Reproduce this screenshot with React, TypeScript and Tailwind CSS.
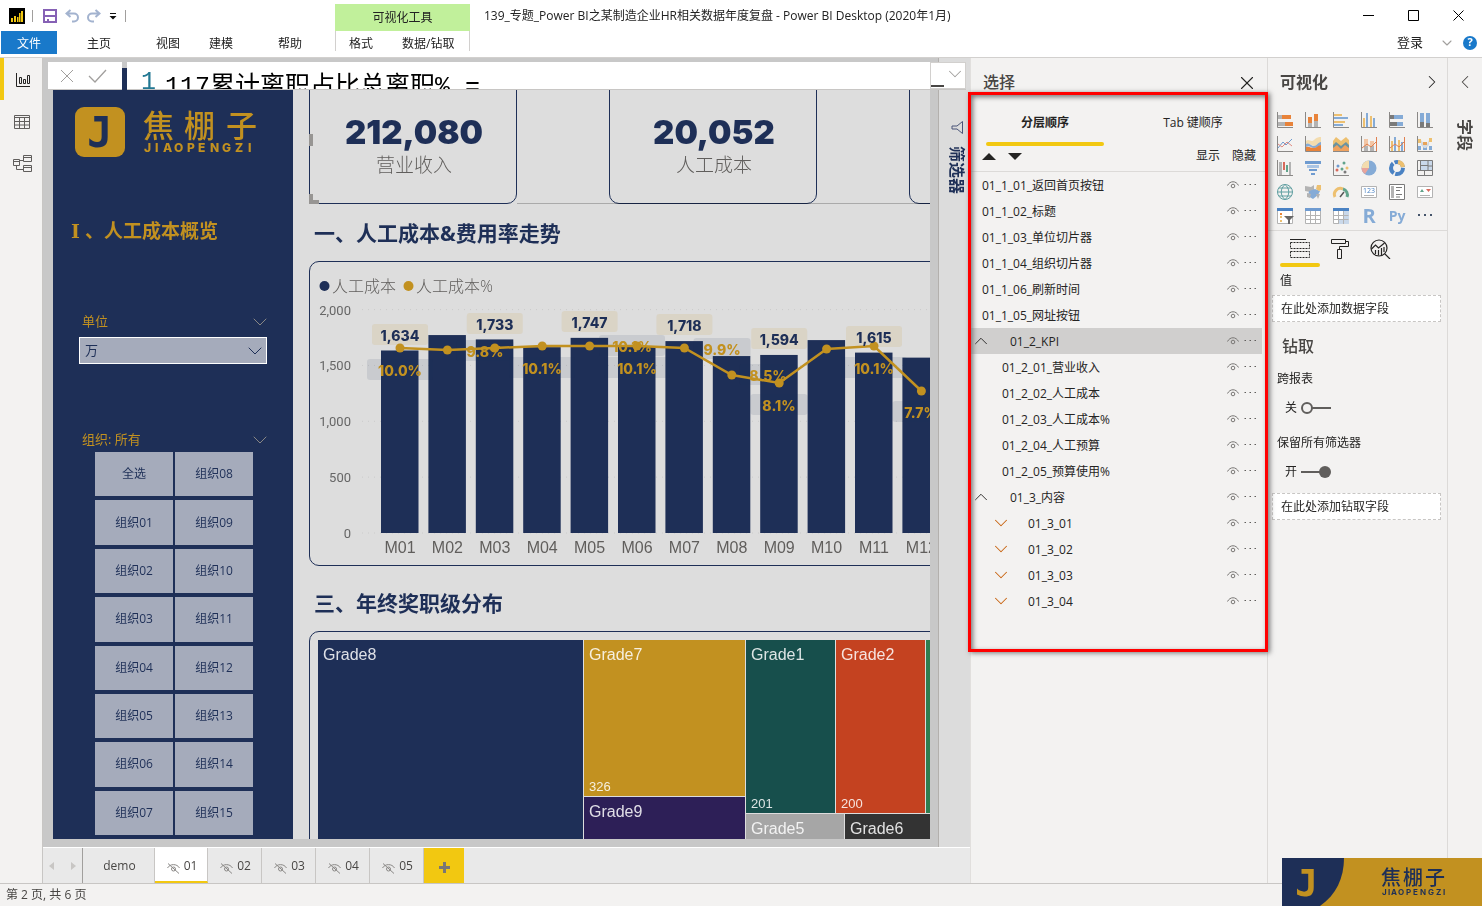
import type { ReactNode } from "react";
import { ChevronDown, ChevronLeft, ChevronRight, ChevronUp, X } from "lucide-react";

// ─── Data ────────────────────────────────────────────────────────────────────

const ORGS = [
  "全选", "组织08", "组织01", "组织09", "组织02", "组织10", "组织03", "组织11",
  "组织04", "组织12", "组织05", "组织13", "组织06", "组织14", "组织07", "组织15",
];

const MONTHS = [
  { name: "M01", cost: 1634, lineY: 86, label: "1,634", labelY: 62 },
  { name: "M02", cost: 1772, lineY: 88 },
  { name: "M03", cost: 1733, lineY: 86, label: "1,733", labelY: 51 },
  { name: "M04", cost: 1664, lineY: 84 },
  { name: "M05", cost: 1747, lineY: 84, label: "1,747", labelY: 49 },
  { name: "M06", cost: 1670, lineY: 84 },
  { name: "M07", cost: 1718, lineY: 86, label: "1,718", labelY: 52 },
  { name: "M08", cost: 1584, lineY: 113 },
  { name: "M09", cost: 1594, lineY: 121, label: "1,594", labelY: 66 },
  { name: "M10", cost: 1727, lineY: 87 },
  { name: "M11", cost: 1615, lineY: 84, label: "1,615", labelY: 64 },
  { name: "M12", cost: 1570, lineY: 129 },
];

const RATES = [
  { text: "10.0%", x: 90, y: 97, w: 66 },
  { text: "9.8%", x: 175, y: 78, w: 57 },
  { text: "10.1%", x: 232, y: 95, w: 66 },
  { text: "10.1%", x: 322, y: 73, w: 66 },
  { text: "10.1%", x: 327, y: 95, w: 66 },
  { text: "9.9%", x: 412, y: 76, w: 57 },
  { text: "8.5%", x: 458, y: 102, w: 57 },
  { text: "8.1%", x: 469, y: 132, w: 57 },
  { text: "10.1%", x: 564, y: 95, w: 66 },
  { text: "7.7%", x: 611, y: 139, w: 57 },
];

type Layer = { name: string; kind: "item" | "group" | "child" | "sub"; selected?: boolean };

const LAYERS: Layer[] = [
  { name: "01_1_01_返回首页按钮", kind: "item" },
  { name: "01_1_02_标题", kind: "item" },
  { name: "01_1_03_单位切片器", kind: "item" },
  { name: "01_1_04_组织切片器", kind: "item" },
  { name: "01_1_06_刷新时间", kind: "item" },
  { name: "01_1_05_网址按钮", kind: "item" },
  { name: "01_2_KPI", kind: "group", selected: true },
  { name: "01_2_01_营业收入", kind: "child" },
  { name: "01_2_02_人工成本", kind: "child" },
  { name: "01_2_03_人工成本%", kind: "child" },
  { name: "01_2_04_人工预算", kind: "child" },
  { name: "01_2_05_预算使用%", kind: "child" },
  { name: "01_3_内容", kind: "group" },
  { name: "01_3_01", kind: "sub" },
  { name: "01_3_02", kind: "sub" },
  { name: "01_3_03", kind: "sub" },
  { name: "01_3_04", kind: "sub" },
];

const layerIndent = {
  item: "pl-[11px]",
  group: "pl-[5px]",
  child: "pl-[31px]",
  sub: "pl-[25px]",
};

// ─── Header ──────────────────────────────────────────────────────────────────

function Header() {
  return (
    <header className="flex h-[58px] shrink-0 border-b border-[#d2d0ce] bg-white text-xs text-[#222]">
      <div className="flex w-[335px] shrink-0 flex-col">
        <div className="flex h-[31px] items-center pl-[9px]">
          <svg width="16" height="16" viewBox="0 0 16 16">
            <path d="M0 0h16v16H0z" fill="#000" />
            <path d="M2 10h2v4H2zM5 8h2v6H5zM8 9h1.500v5H8zM10 5h1.500v9H10zM12 3h2v11h-2z" fill="#f2c811" />
          </svg>
          <span className="ml-[7px] h-3 w-px bg-[#a19f9d]" />
          <button aria-label="保存" className="ml-2.5">
            <svg width="14" height="14" viewBox="0 0 14 14" fill="none" stroke="#8661b5" strokeWidth="2">
              <path d="M1 1h12v12H1zM1 7h12" />
              <path d="M3 13h8M5 10v4" />
            </svg>
          </button>
          <button aria-label="撤消" className="ml-2">
            <svg width="14" height="14" viewBox="0 0 14 14" fill="none" stroke="#a3b3cf" strokeWidth="2">
              <path d="M5.500 1L1.500 4.500 5.500 8M2 4.500h7a3.600 3.600 0 010 8H7" />
            </svg>
          </button>
          <button aria-label="恢复" className="ml-2">
            <svg width="14" height="14" viewBox="0 0 14 14" fill="none" stroke="#a3b3cf" strokeWidth="2">
              <path d="M8.500 1l4 3.500-4 3.500M12 4.500H5a3.600 3.600 0 000 8h2" />
            </svg>
          </button>
          <button aria-label="自定义快速访问工具栏" className="ml-2">
            <svg width="8" height="8" viewBox="0 0 8 8" fill="#111">
              <path d="M1 1h6v1H1zM.5 4h7L4 7.500z" />
            </svg>
          </button>
          <span className="ml-2 h-3 w-px bg-[#a19f9d]" />
        </div>
        <nav className="flex h-[23px] items-center pl-px">
          <button className="h-full w-14 bg-[#1979ca] pt-0.5 text-white">文件</button>
          <button className="ml-[30px] pt-0.5">主页</button>
          <button className="ml-[45px] pt-0.5">视图</button>
          <button className="ml-[29px] pt-0.5">建模</button>
          <button className="ml-[45px] pt-0.5">帮助</button>
        </nav>
      </div>
      <div className="mt-1 flex w-[135px] shrink-0 flex-col">
        <div className="flex h-[27px] items-center justify-center bg-[#c1f09b]">可视化工具</div>
        <div className="flex h-[20px] items-center border-x border-[#d2d0ce] pt-1.5">
          <button className="ml-[13px]">格式</button>
          <button className="ml-[29px]">数据/钻取</button>
        </div>
      </div>
      <div className="flex min-w-0 flex-1 flex-col">
        <div className="flex h-[31px] items-center justify-between pr-[18px] pl-3.5">
          <span className="truncate text-xs">
            139_专题_Power BI之某制造企业HR相关数据年度复盘 - Power BI Desktop (2020年1月)
          </span>
          <div className="flex shrink-0 items-center gap-[34px]">
            <button aria-label="最小化">
              <svg width="11" height="11" viewBox="0 0 11 11" stroke="#000"><path d="M0 5.500h11" /></svg>
            </button>
            <button aria-label="最大化">
              <svg width="11" height="11" viewBox="0 0 11 11" fill="none" stroke="#000"><path d="M.5.5h10v10H.5z" /></svg>
            </button>
            <button aria-label="关闭">
              <svg width="11" height="11" viewBox="0 0 11 11" stroke="#000"><path d="M.5.5l10 10M10.500.5l-10 10" /></svg>
            </button>
          </div>
        </div>
        <div className="flex h-[23px] items-center justify-end pr-[5px]">
          <button className="text-[13px]">登录</button>
          <button aria-label="折叠功能区" className="ml-4 text-[#a19f9d]"><ChevronDown size={16} strokeWidth={1.6} /></button>
          <button aria-label="帮助" className="ml-2 flex size-3.5 items-center justify-center rounded-full bg-[#1979ca] text-[11px] font-bold text-white">
            ?
          </button>
        </div>
      </div>
    </header>
  );
}

// ─── Left rail ───────────────────────────────────────────────────────────────

function ViewRail() {
  return (
    <nav className="flex w-[43px] shrink-0 flex-col border-r border-[#c8c6c4] bg-[#f3f2f1]">
      <button aria-label="报表" className="flex h-[42px] items-center justify-center border-l-4 border-[#f2c811] pt-0.5">
        <svg width="16" height="16" viewBox="0 0 16 16" fill="none" stroke="#252423">
          <path d="M1.500 1v13.500H15M4.500 5.500h2v6h-2zM8.500 7.500h2v4h-2zM12.500 3.500h2v8h-2z" />
        </svg>
      </button>
      <button aria-label="数据" className="flex h-[42px] items-center justify-center pt-0.5 pl-0.5">
        <svg width="16" height="16" viewBox="0 0 16 16" fill="none" stroke="#605e5c">
          <path d="M.5 1.500h15v13H.5zM.5 3.500h15M.5 7.500h15M.5 11h15M5.500 3.500v11M10.500 3.500v11" />
        </svg>
      </button>
      <button aria-label="模型" className="flex h-[42px] items-center justify-center pt-0.5 pl-1">
        <svg width="20" height="18" viewBox="0 0 20 18" fill="none" stroke="#605e5c">
          <path d="M.5 4.500h6v6h-6zM10.500.5h8v6h-8zM10.500 10.500h8v6h-8zM.5 6.500h6M10.500 2.500h8M10.500 12.500h8M6.500 5.500h4M3.500 10.500v4h7" />
        </svg>
      </button>
    </nav>
  );
}

// ─── Report page ─────────────────────────────────────────────────────────────

function BrandLogo() {
  return (
    <svg width="184" height="50" viewBox="0 0 184 50" className="font-['Inter','Noto_Sans_CJK_SC',sans-serif]">
      <rect width="50" height="50" rx="9" fill="#c29120" />
      <text x="12" y="40" fontSize="42" fontWeight="700" fill="#1e2f57" className="font-['DejaVu_Sans_Mono',monospace]">J</text>
      <g fill="#c29120">
        <text x="68 109 151" y="30" fontSize="31" fontWeight="500">焦棚子</text>
        <text x="69 80 88 99 112 123 135 147 160 173" y="45" fontSize="12" fontWeight="800">JIAOPENGZI</text>
      </g>
    </svg>
  );
}

function ReportSidebar() {
  return (
    <aside className="flex w-60 shrink-0 flex-col bg-[#1e2f57] pt-[39px] pb-1 text-[#c29120]">
      <div className="pl-[22px]">
        <BrandLogo />
      </div>
      <h1 className="mt-[60px] h-7 pl-[13px] text-[19px] leading-7 font-bold whitespace-nowrap">
        <span className="inline-block w-[19px] text-center font-['DejaVu_Serif',serif]">Ⅰ</span>、人工成本概览
      </h1>
      <div className="mt-[68px] flex h-[18px] items-center justify-between pr-[21px] pl-[29px] text-[13px]">
        <label htmlFor="unit">单位</label>
        <ChevronDown size={24} strokeWidth={1} className="text-[#8a8886]" />
      </div>
      <div className="mt-1.5 mr-[26px] ml-[26px] grid text-[#1e2f57]">
        <select id="unit" className="col-start-1 row-start-1 h-[27px] appearance-none border border-white bg-[#a5abbb] pl-[5px] text-[13px]">
          <option>万</option>
        </select>
        <ChevronDown size={24} strokeWidth={1} className="pointer-events-none col-start-1 row-start-1 self-center justify-self-end" />
      </div>
      <div className="mt-[67px] flex h-[18px] items-center justify-between pr-[21px] pl-[29px] text-[13px]">
        <span>组织: 所有</span>
        <ChevronDown size={24} strokeWidth={1} className="text-[#8a8886]" />
      </div>
      <div className="mx-[42px] mt-[3px] grid h-[383px] grid-cols-[78px_78px] grid-rows-8 gap-x-0.5 gap-y-1">
        {ORGS.map((org) => (
          <button key={org} className="bg-[#a5abbb] text-xs text-[#1e2f57]">
            {org}
          </button>
        ))}
      </div>
    </aside>
  );
}

function KpiCard({ value, label }: { value?: string; label?: string }) {
  return (
    <div className="h-[136px] w-[208px] shrink-0 rounded-[10px] border border-[#1e2f57] pt-[43px] pl-0.5 text-center">
      {value && (
        <div className="h-10 font-['Inter',sans-serif] text-[33px] leading-10 font-black text-[#1e2f57]">{value}</div>
      )}
      {label && <div className="mt-px text-[19px] leading-6 font-light text-[#605e5c]">{label}</div>}
    </div>
  );
}

const barX = (i: number) => 90 + i * 47.4;
const costY = (v: number) => 271 - v * 0.1117;

function CostChart() {
  return (
    <svg width="662" height="303" viewBox="0 0 662 303" className="block">
      <g fontSize="16" fill="#605e5c" fontWeight="300">
        <circle cx="14.500" cy="24" r="5" fill="#1e2f57" />
        <text x="22" y="30">人工成本</text>
        <circle cx="98.500" cy="24" r="5" fill="#c29120" />
        <text x="106" y="30">人工成本%</text>
      </g>
      {[2000, 1500, 1000, 500, 0].map((v) => (
        <g key={v}>
          <line x1="52" x2="662" y1={costY(v)} y2={costY(v)} stroke="#cbcbcb" strokeDasharray="1 5" />
          <text x="41" y={costY(v) + 5} textAnchor="end" fontSize="13" fill="#666" className="font-['Roboto',sans-serif]">
            {v.toLocaleString("en-US")}
          </text>
        </g>
      ))}
      {MONTHS.map((m, i) => (
        <g key={m.name}>
          <rect x={barX(i) - 19} y={costY(m.cost)} width="37.500" height={271 - costY(m.cost)} fill="#1e2f57" />
          <text x={barX(i)} y="291" textAnchor="middle" fontSize="16" fill="#605e5c" className="font-['Liberation_Sans',sans-serif]">
            {m.name}
          </text>
        </g>
      ))}
      {RATES.map((r, i) => (
        <rect key={i} x={r.x - r.w / 2} y={r.y} width={r.w} height="21" rx="3" fill="#1e2f57" fillOpacity="0.1" />
      ))}
      <polyline
        points={MONTHS.map((m, i) => `${barX(i)},${m.lineY}`).join(" ")}
        fill="none"
        stroke="#c29120"
        strokeWidth="2.500"
      />
      {MONTHS.map((m, i) => (
        <circle key={m.name} cx={barX(i)} cy={m.lineY} r="4.500" fill="#c29120" />
      ))}
      <g fontSize="14" fontWeight="800" textAnchor="middle" className="font-['Inter',sans-serif]">
        {RATES.map((r, i) => (
          <text key={i} x={r.x} y={r.y + 17} fill="#c29120">{r.text}</text>
        ))}
        {MONTHS.map((m, i) =>
          m.label ? (
            <g key={m.name}>
              <rect x={barX(i) - 28} y={m.labelY} width="56" height="21" rx="3" fill="#c29120" fillOpacity="0.12" />
              <text x={barX(i)} y={m.labelY + 17} fill="#1e2f57">{m.label}</text>
            </g>
          ) : null,
        )}
      </g>
    </svg>
  );
}

function Tile({ name, value, className }: { name: string; value?: string; className: string }) {
  return (
    <div className={`flex flex-col justify-between overflow-hidden px-[5px] pt-[5px] text-white/85 ${className}`}>
      <span className="text-base leading-5">{name}</span>
      {value && <span className="text-[13px] leading-[18px]">{value}</span>}
    </div>
  );
}

function GradeTreemap() {
  return (
    <div className="flex h-[220px] gap-px font-['Liberation_Sans',sans-serif]">
      <Tile name="Grade8" className="w-[265px] bg-[#1e2f57]" />
      <div className="flex w-[161px] flex-col gap-px">
        <Tile name="Grade7" value="326" className="h-[156px] bg-[#c29120]" />
        <Tile name="Grade9" className="flex-1 bg-[#2d1f57]" />
      </div>
      <div className="flex flex-1 flex-col gap-px">
        <div className="flex h-[173px] gap-px">
          <Tile name="Grade1" value="201" className="w-[89px] bg-[#174f4c]" />
          <Tile name="Grade2" value="200" className="w-[89px] bg-[#c44220]" />
          <Tile name="" className="flex-1 bg-[#2f7d4f]" />
        </div>
        <div className="flex flex-1 gap-px">
          <Tile name="Grade5" className="w-[98px] bg-[#a6a6a6]" />
          <Tile name="Grade6" className="flex-1 bg-[#333]" />
        </div>
      </div>
    </div>
  );
}

function ReportCanvas() {
  return (
    <div className="min-w-0 flex-1 bg-[#c8c8c8] pt-2.5 pr-2 pb-2 pl-2.5">
      <div className="flex h-[771px] overflow-hidden bg-[#ddd]">
        <ReportSidebar />
        <div className="w-[700px] shrink-0 pl-4 text-[#1e2f57]">
          <div className="relative flex h-[136px] gap-[92px] overflow-hidden">
            <KpiCard value="212,080" label="营业收入" />
            <KpiCard value="20,052" label="人工成本" />
            <KpiCard />
            {/* selection frame and handles */}
            <span className="absolute bottom-0 left-[208px] h-px w-full bg-[#c4c4c4] mix-blend-multiply" />
            <span className="absolute top-[66px] left-0 h-3 w-1 bg-[#979593]" />
            <span className="absolute bottom-0 left-0 size-2.5 border-b-4 border-l-4 border-[#979593]" />
          </div>
          <h2 className="h-[57px] pl-[5px] text-[21px] leading-[58px] font-bold">一、人工成本&amp;费用率走势</h2>
          <section className="h-[305px] overflow-hidden rounded-[10px] border border-[#1e2f57]">
            <CostChart />
          </section>
          <h2 className="h-[65px] pt-2 pl-[5px] text-[21px] leading-[58px] font-bold">三、年终奖职级分布</h2>
          <section className="rounded-[10px] border border-[#1e2f57] p-2">
            <GradeTreemap />
          </section>
        </div>
      </div>
    </div>
  );
}

function FormulaBar() {
  return (
    <div className="absolute top-1 right-1 left-[5px] flex h-7 gap-[5px]">
      <div className="flex w-[74px] shrink-0 items-center justify-center gap-3.5 border-b border-[#c8c6c4] bg-white pr-1 text-[#a19f9d]">
        <button aria-label="取消">
          <svg width="14" height="14" viewBox="0 0 14 14" fill="none" stroke="currentColor">
            <path d="M1 1l12 12M13 1L1 13" />
          </svg>
        </button>
        <button aria-label="提交">
          <svg width="19" height="14" viewBox="0 0 19 14" fill="none" stroke="currentColor" strokeWidth="1.300">
            <path d="M1 7l6 6L18 1" />
          </svg>
        </button>
      </div>
      <div className="flex min-w-0 flex-1 overflow-hidden border-b border-[#c8c6c4] bg-white">
        <div className="flex h-[42px] min-w-0 flex-1 items-center font-['Liberation_Mono','Noto_Sans_CJK_SC',monospace] text-[25px] text-black">
          <span className="w-[38px] shrink-0 pl-3.5 text-[#237893]">1</span>
          <input aria-label="公式" defaultValue="117累计离职占比总离职% =" className="h-10 min-w-0 flex-1 outline-none" />
        </div>
        <div className="flex w-9 shrink-0 items-start justify-between border border-[#d2d0ce]">
          <span className="mt-[22px] h-0.5 w-[13px] shrink-0 bg-[#484644]" />
          <button aria-label="展开" className="text-[#a19f9d]"><ChevronDown size={22} strokeWidth={1.1} /></button>
        </div>
      </div>
    </div>
  );
}

function FilterStrip() {
  return (
    <div className="flex w-8 shrink-0 flex-col items-center border-l border-[#b3b0ad] bg-[#dcdcdc] pt-[63px] pl-1">
      <button className="flex flex-col items-center gap-3 text-[#1e2f57]">
        <svg width="12" height="13" viewBox="0 0 12 13" fill="none" stroke="#4a5578">
          <path d="M11.500.5v12L6 8H1V5h5z" />
        </svg>
        <span className="text-base leading-4 font-bold [text-orientation:sideways] [writing-mode:vertical-rl]">筛选器</span>
      </button>
    </div>
  );
}

// ─── Page tabs ───────────────────────────────────────────────────────────────

function EyeOff() {
  return (
    <svg width="13" height="12" viewBox="0 0 13 12" fill="none" stroke="#8a8886" className="mt-1">
      <path d="M.5 6C3 1.500 10 1.500 12.500 6M1 1.500l11 10M6.500 5a2 2 0 100 4 2 2 0 000-4z" />
    </svg>
  );
}

function PageTabs() {
  return (
    <div className="flex h-9 shrink-0 border-t border-white bg-[#e9e9e9] text-xs text-[#484644]">
      <div className="flex w-10 items-center justify-between border-r border-[#a19f9d] px-1.5 text-[#c8c6c4]">
        <button aria-label="上一页">
          <svg width="5" height="8" viewBox="0 0 5 8" fill="currentColor"><path d="M5 0v8L0 4z" /></svg>
        </button>
        <button aria-label="下一页">
          <svg width="5" height="8" viewBox="0 0 5 8" fill="currentColor"><path d="M0 0v8l5-4z" /></svg>
        </button>
      </div>
      <button className="w-[72px] border-r border-[#c8c6c4] pl-0.5">demo</button>
      <button className="flex w-[53px] items-center justify-center gap-1 border-r border-b-2 border-r-[#c8c6c4] border-b-[#f2c811] bg-white pt-0.5 pl-0.5">
        <EyeOff />01
      </button>
      {["02", "03", "04", "05"].map((p) => (
        <button key={p} className="flex w-[54px] items-center justify-center gap-1 border-r border-[#c8c6c4] pl-0.5">
          <EyeOff />
          {p}
        </button>
      ))}
      <button aria-label="新建页" className="flex w-10 items-center justify-center bg-[#f2c811] pt-1">
        <svg width="11" height="11" viewBox="0 0 11 11" stroke="#797775" strokeWidth="3"><path d="M5.500 0v11M0 5.500h11" /></svg>
      </button>
    </div>
  );
}

// ─── Selection pane ──────────────────────────────────────────────────────────

function LayerRow({ name, kind, selected }: Layer) {
  return (
    <li className={`mr-[5px] flex h-[26px] items-center pr-[6px] ${layerIndent[kind]} ${selected ? "bg-[#d0cfce]" : ""}`}>
      {kind === "group" && (
        <button aria-label="折叠" className="w-[34px] shrink-0"><ChevronUp size={22} strokeWidth={1} className="-ml-1.5" /></button>
      )}
      {kind === "sub" && (
        <button aria-label="展开" className="w-8 shrink-0 text-[#c8640f]"><ChevronDown size={22} strokeWidth={1.1} className="-ml-1.5" /></button>
      )}
      <span className="flex-1 truncate pt-0.5">{name}</span>
      <button aria-label="隐藏" className="mr-[5px]">
        <svg width="12" height="8" viewBox="0 0 12 8" fill="none" stroke="#797775">
          <path d="M.5 4.500C3-.5 9-.5 11.500 4.500" />
          <circle cx="6" cy="5" r="1.800" />
        </svg>
      </button>
      <button aria-label="更多">
        <svg width="12" height="4" viewBox="0 0 12 4" fill="#605e5c"><path d="M.5 1h1.500v1H.5zM5.500 1H7v1H5.500zM10.500 1H12v1h-1.500z" /></svg>
      </button>
    </li>
  );
}

function SelectionPane() {
  return (
    <section className="relative w-[297px] shrink-0 border-l border-[#e1dfdd] bg-[#f3f2f1] text-xs text-[#252423]">
      <div className="flex h-[38px] items-end justify-between pr-[9px] pb-0.5 pl-3">
        <h2 className="text-base leading-6 font-medium text-[#484644]">选择</h2>
        <button aria-label="关闭"><X size={22} strokeWidth={1.2} /></button>
      </div>
      <div className="flex pt-[17px]">
        <button className="ml-[15px] h-[34px] w-[118px] font-bold">
          <span className="block h-[27px] leading-4">分层顺序</span>
          <span className="block h-1 rounded-full bg-[#f2c811]" />
        </button>
        <button className="ml-[30px] h-[26px] w-[118px] pb-1.5">Tab 键顺序</button>
      </div>
      <div className="flex h-[25px] items-center gap-3 border-b border-[#dcdad8] pr-[11px] pb-1.5 pl-[11px]">
        <button aria-label="上移">
          <svg width="14" height="7" viewBox="0 0 14 7" fill="#252423"><path d="M7 0l7 7H0z" /></svg>
        </button>
        <button aria-label="下移">
          <svg width="14" height="7" viewBox="0 0 14 7" fill="#252423"><path d="M0 0h14L7 7z" /></svg>
        </button>
        <span className="flex-1" />
        <button>显示</button>
        <button>隐藏</button>
      </div>
      <ul>
        {LAYERS.map((l) => (
          <LayerRow key={l.name} {...l} />
        ))}
      </ul>
      {/* callout frame */}
      <div className="pointer-events-none absolute top-[34px] -right-px -left-[3px] z-10 h-[560px] border-[3px] border-[#f00] shadow-[2px_1px_5px_#777,inset_2px_2px_5px_#777]" />
    </section>
  );
}

// ─── Visualizations pane ─────────────────────────────────────────────────────

const AXIS = <path d="M.5 0v15.500H16" fill="none" stroke="#8a8886" />;

const VISUALS: { name: string; art: ReactNode }[] = [
  { name: "堆积条形图", art: <>{AXIS}<path d="M1 3h4v4H1zM1 10h7v4H1z" fill="#b3b3b3" /><path d="M5 3h9v4H5zM8 10h8v4H8z" fill="#e8833a" /></> },
  { name: "堆积柱形图", art: <>{AXIS}<path d="M3 5h4v6H3zM9 2h4v7H9z" fill="#e8833a" /><path d="M3 11h4v4H3zM9 9h4v6H9z" fill="#b3b3b3" /></> },
  { name: "簇状条形图", art: <>{AXIS}<path d="M1 2h8v2H1zM1 9h11v2H1z" fill="#edc070" /><path d="M1 5h14v2H1zM1 12h9v2H1z" fill="#85abd6" /></> },
  { name: "簇状柱形图", art: <>{AXIS}<path d="M2 6h2v9H2zM9 4h2v11H9z" fill="#edc070" /><path d="M5 1h2v14H5zM12 6h2v9h-2z" fill="#85abd6" /></> },
  { name: "百分比堆积条形图", art: <>{AXIS}<path d="M1 3h4v4H1zM1 10h7v4H1z" fill="#7a7a7a" /><path d="M5 3h9v4H5zM8 10h6v4H8z" fill="#85abd6" /></> },
  { name: "百分比堆积柱形图", art: <>{AXIS}<path d="M3 1h4v9H3zM9 1h4v10H9z" fill="#85abd6" /><path d="M3 10h4v5H3zM9 11h4v4H9z" fill="#7a7a7a" /></> },
  { name: "折线图", art: <>{AXIS}<path d="M1 12l5-6 3 3 6-6" fill="none" stroke="#6f9bd0" /><path d="M1 8l4 3 5-5 5 4" fill="none" stroke="#e08a80" /></> },
  { name: "分区图", art: <>{AXIS}<path d="M1 5c3-3 5 2 8-1s5-3 7-3v6c-3 1-4 4-7 3S4 7 1 8z" fill="#f3dcae" /><path d="M1 8c3-2 5 2 8 2s4-4 7-4v3c-3 1-4 3-7 3S4 9 1 11z" fill="#85abd6" /><path d="M1 11c3-1 5 1 8 1s4-3 7-3v6H1z" fill="#e8833a" /></> },
  { name: "堆积面积图", art: <><path d="M0 5l3-4 5 4 5-4 3 3v11H0z" fill="#edc070" /><path d="M0 9l3-3 5 4 5-4 3 3v6H0z" fill="#6a93a0" /><path d="M0 12l4-3 4 4 4-4 4 3v3H0z" fill="#efa25f" /><path d="M0 15.500h16" stroke="#8a8886" /></> },
  { name: "折线和堆积柱形图", art: <>{AXIS}<path d="M3 3h4v7H3zM9 5h4v6H9z" fill="#f3c6a5" /><path d="M3 10h4v5H3zM9 10h4v5H9z" fill="#b3b3b3" /><path d="M1 12l5-4 4 3 5-5M15.500 1v14" fill="none" stroke="#e08050" /></> },
  { name: "折线和簇状柱形图", art: <>{AXIS}<path d="M2 5h2v10H2zM9 4h2v11H9z" fill="#edc070" /><path d="M5 1h2v14H5zM12 6h2v9h-2z" fill="#85abd6" /><path d="M1 12l5-4 4 3 5-5M15.500 1v14" fill="none" stroke="#e08050" /></> },
  { name: "功能区图表", art: <>{AXIS}<path d="M1 3h3v4H1zM12 2h3v4h-3z" fill="#edc070" /><path d="M1 10h3v4H1zM6 11h4v3H6zM12 10h3v4h-3z" fill="#85abd6" /><path d="M4 4l3 4h3l2-4v5l-3 3H7L4 9z" fill="#d5dbe2" /><path d="M6 6h4v3H6z" fill="#e8a45a" /></> },
  { name: "瀑布图", art: <>{AXIS}<path d="M2 2h3v13H2z" fill="#b3b3b3" /><path d="M6 2h2v8H6z" fill="#d86a5c" /><path d="M9 5h2v7H9z" fill="#61a38b" /><path d="M12 2h2v13h-2z" fill="#b3b3b3" /></> },
  { name: "漏斗图", art: <><path d="M0 1h16v3H0zM4 9h8v2H4zM6 13h4v2H6z" fill="#6f9bd0" /><path d="M2 5h12v3H2z" fill="#a9c4e4" /></> },
  { name: "散点图", art: <>{AXIS}<g><circle cx="4" cy="10" r="1.500" fill="#d86a5c" /><circle cx="5" cy="6" r="1.500" fill="#6f9bd0" /><circle cx="11" cy="3" r="1.500" fill="#61a38b" /><circle cx="9" cy="9" r="1.500" fill="#61a38b" /><circle cx="14" cy="8" r="1.500" fill="#edc070" /><circle cx="12" cy="12" r="1.500" fill="#7a7a7a" /></g></> },
  { name: "饼图", art: <><circle cx="8" cy="8" r="7.500" fill="#85abd6" /><path d="M8 8V.5A7.500 7.500 0 00.5 8z" fill="#f3dcae" /><path d="M8 8H.5a7.500 7.500 0 003.500 6z" fill="#e8a49c" /></> },
  { name: "环形图", art: <><circle cx="8" cy="8" r="6" fill="none" stroke="#4a82c3" strokeWidth="4" strokeDasharray="11 1.500" /><path d="M9 2a6 6 0 015 5" fill="none" stroke="#edc070" strokeWidth="4" /></> },
  { name: "树状图", art: <><path d="M3 1h12v9H3z" fill="#c9d8ea" /><path d="M.5.5h15v15H.5zM.5 10.500h15M3.500.5v10M11 .5v10M3.500 5.500H11M7.500 10.500v5M11 6h4" fill="none" stroke="#7a7a7a" /></> },
  { name: "地图", art: <path d="M8 .5a7.500 7.500 0 100 15 7.500 7.500 0 000-15zM8 .5c-5 4-5 11 0 15 5-4 5-11 0-15zM.5 8h15M2 4h12M2 12h12" fill="none" stroke="#5f9ea0" /> },
  { name: "着色地图", art: <><path d="M0 2l6 1 3-2v5l-4 2-5-1z" fill="#b3b3b3" /><path d="M4 7l6-2 5 2-2 4-5 4-5-3z" fill="#85abd6" /><path d="M12 1h4v5l-2 1-3-2z" fill="#edc070" /><path d="M2 9l4 1-1 4-3-1zM11 10h4l-2 5z" fill="#b3b3b3" /></> },
  { name: "仪表", art: <><path d="M2 13a6 6 0 018-8" fill="none" stroke="#edc070" strokeWidth="3" /><path d="M10 5a6 6 0 014 8" fill="none" stroke="#61a38b" strokeWidth="3" /><path d="M7 13l4-5" stroke="#555" strokeWidth="1.500" /></> },
  { name: "卡片图", art: <><path d="M.5 2.500h15v11H.5z" fill="#fff" stroke="#b3b3b3" /><path d="M3 11.500h10" stroke="#b3b3b3" /><text x="8" y="9" fontSize="7" fill="#4a82c3" textAnchor="middle">123</text></> },
  { name: "多行卡", art: <><path d="M.5.5h15v15H.5z" fill="#fff" stroke="#7a7a7a" /><path d="M2 2h3v12H2z" fill="#b3b3b3" /><path d="M7 3.500h6M7 6.500h4M7 10.500h6M7 13h4" stroke="#7a7a7a" /></> },
  { name: "KPI", art: <><path d="M.5 2.500h15v11H.5z" fill="#fff" stroke="#b3b3b3" /><path d="M3 8l2-3 2 3z" fill="#61a38b" /><path d="M9 5h5l-2.500 3z" fill="#d86a5c" /><path d="M3 11.500h10" stroke="#b3b3b3" /></> },
  { name: "切片器", art: <><path d="M.5.5h15v15H.5z" fill="#fff" stroke="#b3b3b3" /><path d="M0 0h16v3H0z" fill="#4a82c3" /><path d="M3 5h2v2H3z" fill="#e8833a" /><path d="M3 8h2v2H3zM3 12h2v2H3z" fill="#edc070" /><path d="M7 8h10l-4 4v4h-2v-4z" fill="#666" /></> },
  { name: "表", art: <><path d="M.5.5h15v15H.5zM.5 7.500h15M.5 11.500h15M5.500 3v13M10.500 3v13" fill="#fff" stroke="#b3b3b3" /><path d="M0 0h16v3H0z" fill="#6f9bd0" /></> },
  { name: "矩阵", art: <><path d="M.5.5h15v15H.5z" fill="#fff" stroke="#b3b3b3" /><path d="M5 11h11v5H5zM11 3h5v12h-5z" fill="#c9d8ea" /><path d="M.5 7.500h15M.5 11.500h15M5.500 3v13M10.500 3v13" fill="none" stroke="#b3b3b3" /><path d="M0 0h16v3H0z" fill="#4a82c3" /></> },
  { name: "R 脚本", art: <text x="8" y="15" fontSize="20" fontWeight="700" textAnchor="middle" fill="#85abd6">R</text> },
  { name: "Python", art: <text x="8" y="13" fontSize="14" fontWeight="700" textAnchor="middle" fill="#85abd6">Py</text> },
  { name: "更多", art: <path d="M1 6h2v2H1zM7 6h2v2H7zM13 6h2v2h-2z" fill="#44546a" /> },
];

function DropWell({ children }: { children: ReactNode }) {
  return (
    <div className="mr-1.5 ml-1 flex h-[27px] items-center border border-dashed border-[#c8c6c4] bg-white pl-2">
      {children}
    </div>
  );
}

function Toggle({ text, on }: { text: string; on?: boolean }) {
  return (
    <label className="flex h-5 items-center gap-1 pl-[17px]">
      {text}
      <input type="checkbox" defaultChecked={on} className="peer sr-only" />
      {on ? (
        <svg width="30" height="12" viewBox="0 0 30 12"><path d="M0 6h20" stroke="#605e5c" strokeWidth="2" /><circle cx="24" cy="6" r="6" fill="#605e5c" /></svg>
      ) : (
        <svg width="30" height="12" viewBox="0 0 30 12" fill="none" stroke="#605e5c" strokeWidth="2"><circle cx="6" cy="6" r="5" /><path d="M11 6h19" /></svg>
      )}
    </label>
  );
}

function VisualizationsPane() {
  return (
    <section className="w-[181px] shrink-0 border-x border-[#dcdad8] bg-[#f3f2f1] text-xs text-[#252423]">
      <div className="flex h-12 items-center justify-between pr-1 pl-3">
        <h2 className="text-base font-semibold text-[#484644]">可视化</h2>
        <button aria-label="折叠"><ChevronRight size={22} strokeWidth={1.1} /></button>
      </div>
      <div className="grid grid-cols-6 gap-y-2 border-b border-[#dcdad8] pt-1.5 pr-0.5 pb-1.5 pl-[9px]">
        {VISUALS.map((v) => (
          <button key={v.name} aria-label={v.name} className="w-4">
            <svg width="16" height="16" viewBox="0 0 16 16" className="block overflow-visible">{v.art}</svg>
          </button>
        ))}
      </div>
      <div className="flex h-9 pt-2 pl-3">
        <button aria-label="字段" className="flex w-10 flex-col items-center justify-between">
          <svg width="20" height="20" viewBox="0 0 20 20" fill="none" stroke="#252423">
            <path d="M0 .5h16" />
            <path d="M.5 3.500h19v6H.5zM.5 12.500h19v6H.5z" strokeDasharray="2 1" />
          </svg>
          <span className="h-1 w-full shrink-0 rounded-full bg-[#f2c811]" />
        </button>
        <button aria-label="格式" className="w-10 pb-2 pl-[11px]">
          <svg width="20" height="20" viewBox="0 0 20 20" fill="none" stroke="#252423">
            <path d="M.5.5h14v4H.5zM14.500 2.500h3v5H8.500v3M6.500 10.500h4v9h-4z" />
          </svg>
        </button>
        <button aria-label="分析" className="w-10 pb-2 pl-2.5">
          <svg width="21" height="20" viewBox="0 0 21 20" fill="none" stroke="#252423" strokeWidth="1.200">
            <circle cx="9" cy="9" r="8" />
            <path d="M1.500 10l4-4 3 3 6-5M5.500 11v4M8.500 11v5.500M11.500 9v7M14 8v5M15 15l5 5" />
          </svg>
        </button>
      </div>
      <div className="mt-1 h-[24px] pl-3 leading-5">值</div>
      <DropWell>在此处添加数据字段</DropWell>
      <h2 className="mt-3 pl-3.5 text-base leading-6 font-medium text-[#484644]">钻取</h2>
      <div className="mt-3 pl-[9px] leading-[18px]">跨报表</div>
      <div className="mt-2.5"><Toggle text="关" /></div>
      <div className="mt-4 pl-[9px] leading-[18px]">保留所有筛选器</div>
      <div className="mt-2.5 mb-[11px]"><Toggle text="开" on /></div>
      <DropWell>在此处添加钻取字段</DropWell>
    </section>
  );
}

function FieldsStrip() {
  return (
    <section className="flex w-[34px] shrink-0 flex-col items-center bg-[#f3f2f1] pt-[13px] text-[#484644]">
      <button aria-label="展开字段"><ChevronLeft size={22} strokeWidth={1.1} /></button>
      <h2 className="mt-[26px] text-base leading-5 font-semibold [text-orientation:sideways] [writing-mode:vertical-rl]">字段</h2>
    </section>
  );
}

// ─── Page ────────────────────────────────────────────────────────────────────

function Watermark() {
  return (
    <div className="absolute right-0 bottom-0 z-20">
      <svg width="200" height="48" viewBox="0 0 200 48" className="block font-['Inter','Noto_Sans_CJK_SC',sans-serif]">
        <path d="M0 0h200v48H0z" fill="#c29120" />
        <path d="M0 0h62c0 20-8 37-24 48H0z" fill="#1e2f57" />
        <text x="13" y="38" fontSize="38" fontWeight="700" fill="#c29120" className="font-['DejaVu_Sans_Mono',monospace]">J</text>
        <g fill="#1e2f57">
          <text x="99 121 143" y="27" fontSize="20" fontWeight="500">焦棚子</text>
          <text x="100 106 109 116 124 131 138 146 154 161" y="37" fontSize="8" fontWeight="700">JIAOPENGZI</text>
        </g>
      </svg>
    </div>
  );
}

export default function App() {
  return (
    <div className="relative flex min-h-screen flex-col overflow-hidden bg-[#f3f2f1] font-['Open_Sans','Noto_Sans_CJK_SC',sans-serif]">
      <Header />
      <div className="flex flex-1">
        <ViewRail />
        <main className="relative flex min-w-0 flex-1 flex-col">
          <div className="flex flex-1">
            <ReportCanvas />
            <FilterStrip />
          </div>
          <PageTabs />
          <FormulaBar />
        </main>
        <SelectionPane />
        <VisualizationsPane />
        <FieldsStrip />
      </div>
      <footer className="flex h-[23px] shrink-0 items-center border-t border-[#c8c6c4] pl-1.5 text-xs text-[#484644]">
        第 2 页, 共 6 页
      </footer>
      <Watermark />
    </div>
  );
}
